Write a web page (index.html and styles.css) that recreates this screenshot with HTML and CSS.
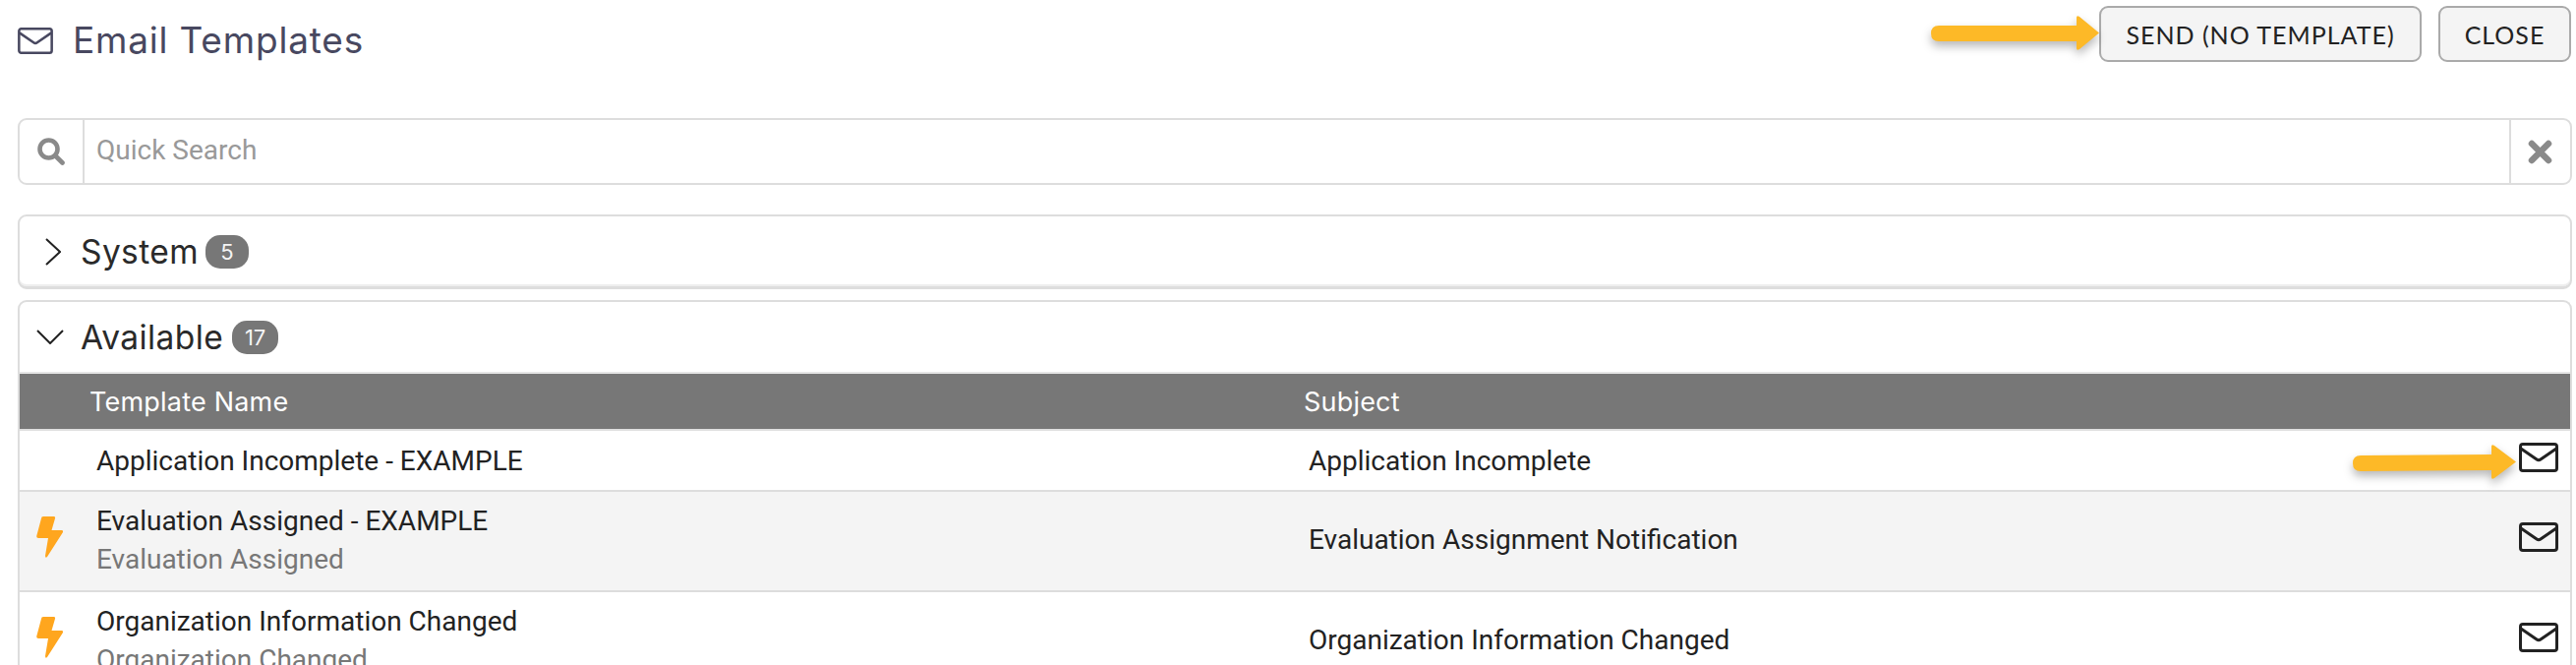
FILE: index.html
```html
<!DOCTYPE html>
<html lang="en">
<head>
<meta charset="utf-8">
<title>Email Templates</title>
<link rel="stylesheet" href="styles.css">
</head>
<body>
<main class="page">
  <header class="top">
    <h1 class="title">
      <svg class="title-icon" viewBox="0 0 40 30"><rect x="1.5" y="1.5" width="37" height="27" rx="2.5"/><path d="M2 6 L18 17 Q20 18.4 22 17 L38 6"/></svg>
      <span>Email Templates</span>
    </h1>
    <div class="actions">
      <button class="btn btn-send">SEND (NO TEMPLATE)</button>
      <button class="btn btn-close">CLOSE</button>
    </div>
  </header>

  <div class="search">
    <span class="search-icon">
      <svg viewBox="0 0 28 28"><circle cx="11.5" cy="11.5" r="9"/><path d="M18.5 18.5 L25.5 25.5"/></svg>
    </span>
    <span class="search-input">Quick Search</span>
    <span class="search-clear">
      <svg viewBox="0 0 25 25"><path d="M4 4 L21 21 M21 4 L4 21"/></svg>
    </span>
  </div>

  <section class="panel panel-closed">
    <div class="panel-head">
      <span class="chev-box"><svg class="chev-right" viewBox="0 0 16 28"><path d="M1 1 L15 14 L1 27"/></svg></span>
      <span class="panel-name">System</span>
      <span class="badge badge-sm">5</span>
    </div>
  </section>

  <section class="panel panel-open">
    <div class="panel-head panel-head-open">
      <span class="chev-box"><svg class="chev-down" viewBox="0 0 28 15"><path d="M1 1 L14 14 L27 1"/></svg></span>
      <span class="panel-name">Available</span>
      <span class="badge badge-lg">17</span>
    </div>
    <div class="thead">
      <span class="th-name">Template Name</span>
      <span class="th-subject">Subject</span>
    </div>
    <div class="row row-single">
      <span class="bolt-cell"></span>
      <div class="name"><div class="primary">Application Incomplete - EXAMPLE</div></div>
      <div class="subject">Application Incomplete</div>
      <svg class="mail" viewBox="0 0 40 30"><rect x="1.5" y="1.5" width="37" height="27" rx="2.5"/><path d="M2 6 L18 17 Q20 18.4 22 17 L38 6"/></svg>
    </div>
    <div class="row row-double row-alt">
      <span class="bolt-cell"><svg class="bolt" viewBox="0 0 27 42"><path d="M5 2 Q5 0 7 0 L17.5 0 Q19.6 0 19 2 L15.5 14 L25.5 14 Q27.6 14 27 16 L11 41 Q9.2 43 9 40 L12 22 L2 22 Q0 22 0.2 20 Z"/></svg></span>
      <div class="name"><div class="primary">Evaluation Assigned - EXAMPLE</div><div class="secondary">Evaluation Assigned</div></div>
      <div class="subject">Evaluation Assignment Notification</div>
      <svg class="mail" viewBox="0 0 40 30"><rect x="1.5" y="1.5" width="37" height="27" rx="2.5"/><path d="M2 6 L18 17 Q20 18.4 22 17 L38 6"/></svg>
    </div>
    <div class="row row-double">
      <span class="bolt-cell"><svg class="bolt" viewBox="0 0 27 42"><path d="M5 2 Q5 0 7 0 L17.5 0 Q19.6 0 19 2 L15.5 14 L25.5 14 Q27.6 14 27 16 L11 41 Q9.2 43 9 40 L12 22 L2 22 Q0 22 0.2 20 Z"/></svg></span>
      <div class="name"><div class="primary">Organization Information Changed</div><div class="secondary">Organization Changed</div></div>
      <div class="subject">Organization Information Changed</div>
      <svg class="mail" viewBox="0 0 40 30"><rect x="1.5" y="1.5" width="37" height="27" rx="2.5"/><path d="M2 6 L18 17 Q20 18.4 22 17 L38 6"/></svg>
    </div>
  </section>
</main>

<svg class="arrow arrow-send" viewBox="0 0 171 37"><path d="M8 11 L148 11 L148 3 Q148 0 151 2 L171 18.5 L151 35 Q148 37 148 34 L148 27 L8 27 Q0 27 0 19 Q0 11 8 11 Z"/></svg>
<svg class="arrow arrow-row" viewBox="0 0 166 37"><path d="M8 12 L141 11 L141 3 Q141 0 144 2 L166 18.5 L144 35 Q141 37 141 34 L141 27 L8 28 Q0 28 0 20 Q0 12 8 12 Z"/></svg>
</body>
</html>
```

FILE: styles.css
```css
* { box-sizing: border-box; }
html, body { margin: 0; height: 676px; overflow: hidden; background: #fff; }
body { position: relative; font-family: "Roboto", sans-serif; color: #222; }

.page { padding: 0 4px 0 18px; }

.top { display: flex; justify-content: space-between; align-items: flex-start; height: 120px; padding-top: 6px; }
.title { display: flex; align-items: center; gap: 20px; margin: 10px 0 0; font: 400 37px/50px "Inter", sans-serif; letter-spacing: 0.8px; color: #484860; }
.title-icon { width: 36px; height: 27px; fill: none; stroke: #484860; stroke-width: 2.8; }

.actions { display: flex; gap: 17px; padding-right: 1px; }
.btn { height: 57px; border: 2px solid #aaa; border-radius: 9px; background: #f4f4f4; color: #222; font: 400 25px "Lato", sans-serif; letter-spacing: 1px; padding: 0; }
.btn-send { width: 328px; }
.btn-close { width: 135px; }

.search { display: flex; align-items: stretch; height: 68px; border: 2px solid #ddd; border-radius: 9px; }
.search-icon { display: flex; align-items: center; justify-content: center; width: 66px; border-right: 2px solid #ddd; }
.search-icon svg { width: 28px; height: 28px; fill: none; stroke: #8a8a8a; stroke-width: 4.6; stroke-linecap: round; }
.search-input { flex: 1; padding-left: 12px; font-size: 28px; line-height: 62px; color: #999; }
.search-clear { display: flex; align-items: center; justify-content: center; width: 62px; padding-right: 2px; border-left: 2px solid #ddd; }
.search-clear svg { width: 25px; height: 25px; fill: none; stroke: #8a8a8a; stroke-width: 6.5; stroke-linecap: round; }

.panel { border: 2px solid #ddd; border-radius: 9px; }
.panel-closed { height: 76px; margin-top: 30px; border-bottom-width: 3px; box-shadow: inset 0 -2px 0 #eee; }
.panel-open { margin-top: 11px; border-bottom: 0; border-radius: 9px 9px 0 0; }
.panel-head { display: flex; align-items: center; height: 71px; }
.panel-head-open { height: 71px; }
.chev-box { display: flex; justify-content: center; align-items: center; width: 62px; flex: none; }
.chev-right { width: 16px; height: 28px; margin-left: 6px; fill: none; stroke: #222; stroke-width: 2; }
.chev-down { width: 28px; height: 15px; fill: none; stroke: #222; stroke-width: 2; }
.panel-name { font: 400 33.5px/40px "Inter", sans-serif; color: #2a2a2a; letter-spacing: 0.4px; }
.badge { display: flex; align-items: center; justify-content: center; height: 34px; border-radius: 15px; background: #777; color: #f4f4f4; font: 400 22px "Inter", sans-serif; }
.badge-sm { width: 44px; margin-left: 7px; }
.badge-lg { width: 47px; margin-left: 9px; }

.thead { display: grid; grid-template-columns: 1306px 1fr; align-items: center; height: 60px; background: #777; border-top: 2px solid #e6e6e6; border-bottom: 2px solid #e0e0e0; color: #fff; font: 400 27px "Inter", sans-serif; letter-spacing: 0.2px; }
.th-name { padding-left: 71px; }

.row { display: grid; grid-template-columns: 78px 1233px 1fr 40px; padding-right: 12px; border-bottom: 2px solid #ddd; font-size: 28px; }
.row-single { height: 62px; align-items: center; }
.row-double { height: 102px; align-items: start; }
.row-alt { background: #f4f4f4; }
.bolt-cell { display: flex; padding-left: 17px; }
.row-double .bolt-cell { padding-top: 25px; }
.bolt { width: 27px; height: 42px; fill: #ffa61e; }
.name { line-height: 39px; }
.row-double .name { padding-top: 10px; }
.secondary { color: #777; }
.row-double .subject { padding-top: 30px; line-height: 38px; }
.mail { width: 40px; height: 30px; fill: none; stroke: #222; stroke-width: 3; }
.row-double .mail { margin-top: 31px; }
.row-single .mail { margin-top: -7px; }

.arrow { position: absolute; fill: #fdb927; filter: drop-shadow(0 5px 5px rgba(0,0,0,.28)); }
.arrow-send { left: 1964px; top: 15px; width: 171px; height: 37px; }
.arrow-row { left: 2393px; top: 451px; width: 166px; height: 37px; }
```
